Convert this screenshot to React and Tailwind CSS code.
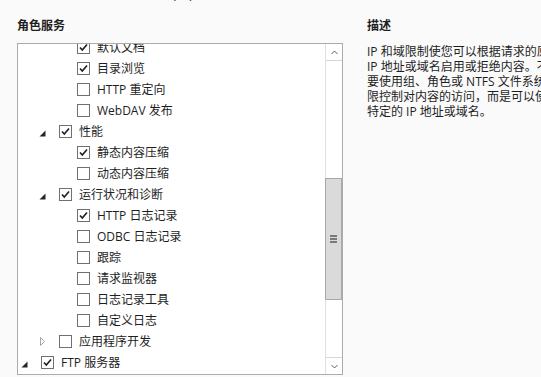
import React from "react";

const rows = [
  { level: 3, label: "默认文档", checked: true },
  { level: 3, label: "目录浏览", checked: true },
  { level: 3, label: "HTTP 重定向", checked: false },
  { level: 3, label: "WebDAV 发布", checked: false },
  { level: 2, label: "性能", checked: true, expander: "open" },
  { level: 3, label: "静态内容压缩", checked: true },
  { level: 3, label: "动态内容压缩", checked: false },
  { level: 2, label: "运行状况和诊断", checked: true, expander: "open" },
  { level: 3, label: "HTTP 日志记录", checked: true },
  { level: 3, label: "ODBC 日志记录", checked: false },
  { level: 3, label: "跟踪", checked: false },
  { level: 3, label: "请求监视器", checked: false },
  { level: 3, label: "日志记录工具", checked: false },
  { level: 3, label: "自定义日志", checked: false },
  { level: 2, label: "应用程序开发", checked: false, expander: "closed" },
  { level: 1, label: "FTP 服务器", checked: true, expander: "open" },
  { level: 2, label: "FTP 服务", checked: true },
];

const indent = { 1: "pl-0", 2: "pl-[18px]", 3: "pl-[36px]" };

const descLines = [
  "IP 和域限制使您可以根据请求的原始",
  "IP 地址或域名启用或拒绝内容。不需",
  "要使用组、角色或 NTFS 文件系统权",
  "限控制对内容的访问，而是可以使用",
  "特定的 IP 地址或域名。",
];

function Expander({ kind }) {
  if (kind === "open") {
    return (
      <svg width="7" height="7" viewBox="0 0 7 7" className="ml-[3px] mt-[3px]">
        <polygon points="6.5,0.5 6.5,6.5 0.5,6.5" fill="#262626" />
      </svg>
    );
  }
  if (kind === "closed") {
    return (
      <svg width="6" height="9" viewBox="0 0 6 9" className="ml-[4px]">
        <polygon points="0.5,0.5 4.5,4.5 0.5,8.5" fill="none" stroke="#a6a6a6" />
      </svg>
    );
  }
  return null;
}

function Checkbox({ checked }) {
  return (
    <span className="w-[13px] h-[13px] border border-[#707070] bg-white flex items-center justify-center shrink-0">
      {checked && (
        <svg width="11" height="11" viewBox="0 0 11 11">
          <path d="M2 5.5 L4.3 8 L9 2.5" fill="none" stroke="#1e1e1e" strokeWidth="1.6" />
        </svg>
      )}
    </span>
  );
}

function Scrollbar() {
  return (
    <div className="w-[17px] border-l border-[#e0e0e0] flex flex-col bg-white shrink-0">
      <div className="h-[17px] border-b border-[#d6d6d6] flex items-center justify-center">
        <svg width="7" height="5" viewBox="0 0 7 5">
          <path d="M0.5 4 L3.5 1 L6.5 4" fill="none" stroke="#606060" />
        </svg>
      </div>
      <div className="h-[117px]" />
      <div className="h-[122px] -ml-px w-[17px] bg-[#dadada] border border-[#a8a8a8] flex flex-col items-center justify-center gap-px">
        <span className="w-[7px] h-[2px] bg-[#7a7a7a]" />
        <span className="w-[7px] h-[2px] bg-[#7a7a7a]" />
        <span className="w-[7px] h-[2px] bg-[#7a7a7a]" />
      </div>
      <div className="h-[57px]" />
      <div className="h-[17px] border-t border-[#d6d6d6] flex items-center justify-center">
        <svg width="7" height="5" viewBox="0 0 7 5">
          <path d="M0.5 1 L3.5 4 L6.5 1" fill="none" stroke="#606060" />
        </svg>
      </div>
    </div>
  );
}

export default function App() {
  return (
    <div
      className="w-[541px] h-[377px] overflow-hidden bg-[#fafafa] text-[#1e1e1e] text-[12px]"
      style={{ fontFamily: '"Open Sans", "Noto Sans CJK SC", sans-serif' }}
    >
      {/* cut-off line at the very top */}
      <div className="h-[3px] overflow-hidden flex items-end">
        <div className="flex leading-[16px] whitespace-nowrap text-[#1e1e1e]">
          <span className="ml-[17px]">7.</span>
          <span className="ml-[30px]">选择要为 Web 服务器(IIS)安装的角色服务</span>
        </div>
      </div>

      <div className="flex mt-[15px]">
        {/* left column */}
        <div className="ml-[17px] w-[326px] shrink-0">
          <div className="font-bold leading-[16px]">角色服务</div>
          <div className="mt-[9px] h-[332px] border border-[#acacac] bg-white flex">
            <div className="flex-1 overflow-hidden">
              <div className="-mt-[7px]">
                {rows.map((r, i) => (
                  <div key={i} className={`h-[21px] flex items-center ${indent[r.level]}`}>
                    <span className="w-[23px] h-[21px] flex items-center shrink-0">
                      <Expander kind={r.expander} />
                    </span>
                    <Checkbox checked={r.checked} />
                    <span className="ml-[7px] whitespace-nowrap leading-[16px]">{r.label}</span>
                  </div>
                ))}
              </div>
            </div>
            <Scrollbar />
          </div>
        </div>

        {/* right column */}
        <div className="ml-[24px] flex-1 overflow-hidden">
          <div className="font-bold leading-[16px]">描述</div>
          <div className="mt-[10px] leading-[15px]">
            {descLines.map((l, i) => (
              <div key={i} className="whitespace-nowrap">{l}</div>
            ))}
          </div>
        </div>
      </div>
    </div>
  );
}
